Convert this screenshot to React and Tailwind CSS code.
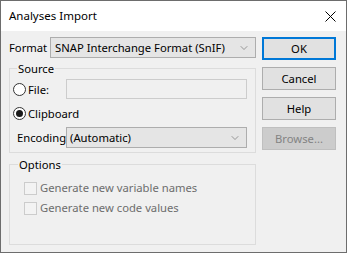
import { ChevronDown } from 'lucide-react';

function Combo({ value, className = '' }) {
  return (
    <div className={`flex items-center min-w-0 h-[21px] bg-[#e5e5e5] border border-[#adadad] pl-[3px] pr-[5px] ${className}`}>
      <span className="flex-1 text-black whitespace-nowrap">{value}</span>
      <ChevronDown className="w-[12px] h-[12px] text-[#606060] shrink-0" strokeWidth={1.2} />
    </div>
  );
}

function Radio({ checked, label }) {
  return (
    <div className="flex items-center gap-[2px]">
      <span className="w-[13px] h-[13px] rounded-full border border-[#333333] bg-white flex items-center justify-center">
        {checked && <span className="w-[7px] h-[7px] rounded-full bg-[#1a1a1a]" />}
      </span>
      <span className="text-black">{label}</span>
    </div>
  );
}

function Check({ label }) {
  return (
    <div className="flex items-center gap-[3px]">
      <span className="w-[13px] h-[13px] border border-[#cccccc] bg-[#f3f3f3]" />
      <span className="text-[#6d6d6d]">{label}</span>
    </div>
  );
}

function Button({ children, variant }) {
  const styles = {
    default: 'border-2 border-[#0078d7] bg-[#e1e1e1] text-black',
    normal: 'border border-[#adadad] bg-[#e1e1e1] text-black',
    disabled: 'border border-[#bfbfbf] bg-[#cccccc] text-[#838383]',
  };
  return (
    <div className={`w-[74px] h-[23px] flex items-center justify-center ${styles[variant]}`}>
      {children}
    </div>
  );
}

export default function App() {
  return (
    <div className="w-[347px] h-[253px] border border-[#6d6d6d] bg-[#f0f0f0] flex flex-col font-['Noto_Sans',sans-serif] text-[11.25px] leading-none">
      {/* Title bar */}
      <div className="h-[30px] bg-white flex items-center justify-between pl-[8px] pr-[10px]">
        <span className="text-[11.5px] text-black">Analyses Import</span>
        <svg width="11" height="11" viewBox="0 0 11 11" className="text-black">
          <path d="M0.5 0.5 L10.5 10.5 M10.5 0.5 L0.5 10.5" stroke="currentColor" strokeWidth="1" />
        </svg>
      </div>

      <div className="flex flex-1 pt-[6px] pl-[8px] pr-[10px]">
        {/* Left column */}
        <div className="w-[248px] flex flex-col">
          <div className="flex items-center h-[21px]">
            <span className="w-[41px] shrink-0">Format</span>
            <Combo value="SNAP Interchange Format (SnIF)" className="flex-1 pl-[4px]" />
          </div>

          <fieldset className="mt-[5px] border border-[#dcdcdc] pl-[3px] pr-[8px] pb-[4px]">
            <legend className="ml-[4px] px-[1px]">Source</legend>
            <div className="flex items-center mt-[5px]">
              <div className="w-[53px]">
                <Radio label="File:" />
              </div>
              <div className="flex-1 h-[20px] border border-[#cccccc] bg-[#f0f0f0]" />
            </div>
            <div className="mt-[8px]">
              <Radio checked label="Clipboard" />
            </div>
            <div className="flex items-center mt-[7px]">
              <span className="w-[53px] pl-[4px]">Encoding</span>
              <Combo value="(Automatic)" className="flex-1" />
            </div>
          </fieldset>

          <fieldset className="mt-[6px] h-[86px] border border-[#dcdcdc] px-[14px]">
            <legend className="-ml-[6px] px-[1px]">Options</legend>
            <div className="flex flex-col gap-[7px] mt-[11px]">
              <Check label="Generate new variable names" />
              <Check label="Generate new code values" />
            </div>
          </fieldset>
        </div>

        {/* Right buttons */}
        <div className="ml-[6px] flex flex-col gap-[7px]">
          <Button variant="default">OK</Button>
          <Button variant="normal">Cancel</Button>
          <Button variant="normal">Help</Button>
          <Button variant="disabled">Browse...</Button>
        </div>
      </div>
    </div>
  );
}
